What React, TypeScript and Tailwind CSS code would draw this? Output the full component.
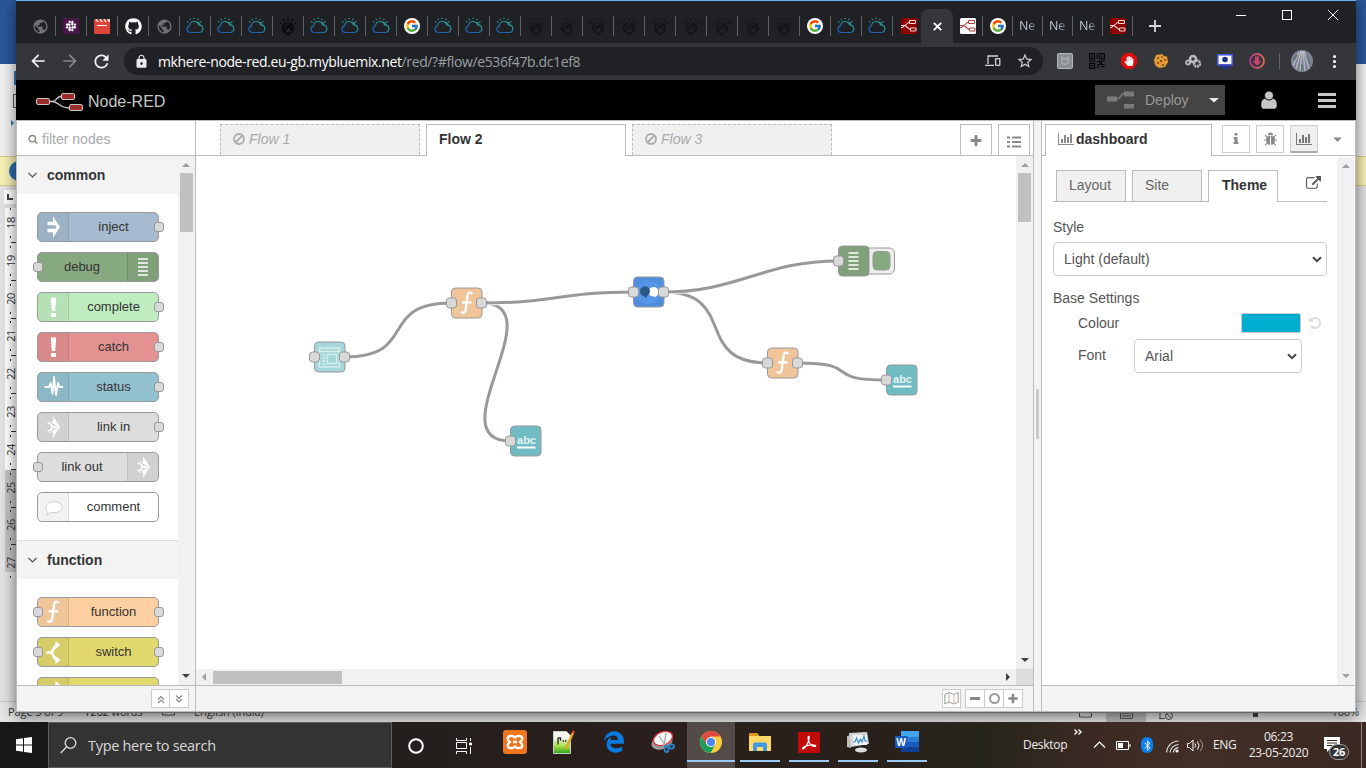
import React from "react";
import { FaGithub, FaSlack, FaEdgeLegacy, FaBluetoothB, FaHandPaper } from "react-icons/fa";
import { FcGoogle } from "react-icons/fc";
import { MdLock, MdArrowBack, MdArrowForward, MdRefresh, MdPublic, MdStarBorder } from "react-icons/md";

const SEGOE = "font-['Open_Sans','Noto_Sans',sans-serif]";
const ARIAL = "font-['Liberation_Sans',Arial,sans-serif]";

const FA = {
  bars: "M640 896v512h-256v-512h256zm384-512v1024h-256v-1024h256zm1024 1152v128h-2048v-1536h128v1408h1920zm-640-896v768h-256v-768h256zm384-384v1152h-256v-1152h256z",
  bug: "M1696 960q0 26-19 45t-45 19h-224q0 171-67 290l208 209q19 19 19 45t-19 45q-18 19-45 19t-45-19l-198-197q-5 5-15 13t-42 28.5-65 36.5-82 29-97 13v-896h-128v896q-51 0-101.5-13.5t-87-33-66-39-43.5-32.5l-15-14-183 207q-20 21-48 21-24 0-43-16-19-18-20.5-44.5t15.5-46.5l202-227q-58-114-58-274h-224q-26 0-45-19t-19-45 19-45 45-19h224v-294l-173-173q-19-19-19-45t19-45 45-19 45 19l173 173h844l173-173q19-19 45-19t45 19 19 45-19 45l-173 173v294h224q26 0 45 19t19 45zm-480-576h-640q0-133 93.5-226.5t226.5-93.5 226.5 93.5 93.5 226.5z",
  info: "M1216 1344v128q0 26-19 45t-45 19h-512q-26 0-45-19t-19-45v-128q0-26 19-45t45-19h64v-384h-64q-26 0-45-19t-19-45v-128q0-26 19-45t45-19h384q26 0 45 19t19 45v576h64q26 0 45 19t19 45zm-128-1152v192q0 26-19 45t-45 19h-256q-26 0-45-19t-19-45v-192q0-26 19-45t45-19h256q26 0 45 19t19 45z",
  plus: "M1600 736v192q0 40-28 68t-68 28h-416v416q0 40-28 68t-68 28h-192q-40 0-68-28t-28-68v-416h-416q-40 0-68-28t-28-68v-192q0-40 28-68t68-28h416v-416q0-40 28-68t68-28h192q40 0 68 28t28 68v416h416q40 0 68 28t28 68z",
  search: "M1216 832q0-185-131.5-316.5t-316.5-131.5-316.5 131.5-131.5 316.5 131.5 316.5 316.5 131.5 316.5-131.5 131.5-316.5zm512 832q0 52-38 90t-90 38q-54 0-90-38l-343-342q-179 124-399 124-143 0-273.5-55.5t-225-150-150-225-55.5-273.5 55.5-273.5 150-225 225-150 273.5-55.5 273.5 55.5 225 150 150 225 55.5 273.5q0 220-124 399l343 343q37 37 37 90z",
  external: "M1408 928v320q0 119-84.5 203.5t-203.5 84.5h-832q-119 0-203.5-84.5t-84.5-203.5v-832q0-119 84.5-203.5t203.5-84.5h704q14 0 23 9t9 23v64q0 14-9 23t-23 9h-704q-66 0-113 47t-47 113v832q0 66 47 113t113 47h832q66 0 113-47t47-113v-320q0-14 9-23t23-9h64q14 0 23 9t9 23zm384-864v512q0 26-19 45t-45 19-45-19l-176-176-652 652q-10 10-23 10t-23-10l-114-114q-10-10-10-23t10-23l652-652-176-176q-19-19-19-45t19-45 45-19h512q26 0 45 19t19 45z",
  undo: "M1664 896q0 156-61 298t-164 245-245 164-298 61q-172 0-327-72.5t-264-204.5q-7-10-6.5-22.5t8.5-20.5l137-138q10-9 25-9 16 2 23 12 73 95 179 147t225 52q104 0 198.5-40.5t163.5-109.5 109.5-163.5 40.5-198.5-40.5-198.5-109.5-163.5-163.5-109.5-198.5-40.5q-98 0-188 35.5t-160 101.5l137 138q31 30 14 69-17 40-59 40h-448q-26 0-45-19t-19-45v-448q0-42 40-59 39-17 69 14l130 129q107-101 244.5-156.5t284.5-55.5q156 0 298 61t245 164 164 245 61 298z",
};

function Fa({ d, size = 14, wide = false, className = "" }: { d: string; size?: number; wide?: boolean; className?: string }) {
  return (
    <svg className={`shrink-0 ${className}`} width={wide ? (size * 2048) / 1792 : size} height={size} viewBox={wide ? "0 0 2048 1792" : "0 0 1792 1792"} fill="currentColor">
      <path d={d} />
    </svg>
  );
}

/* ---------- Browser tab icons ---------- */

function Cloud() {
  return (
    <svg width="18" height="18" viewBox="0 0 18 18" fill="none" strokeWidth="1.2">
      <defs>
        <linearGradient id="cl" x1="0" y1="16" x2="12" y2="0" gradientUnits="userSpaceOnUse">
          <stop offset="0" stopColor="#1a4fb0" />
          <stop offset=".5" stopColor="#22759f" />
          <stop offset="1" stopColor="#2fb598" />
        </linearGradient>
      </defs>
      <path d="M4.200 15.500a3.400 3.400 0 0 1-.6-6.700C3.800 5.800 6 4.500 8 4.500s3.900 1 4.500 3.300c2.700.1 4.300 1.800 4.300 4 0 2.200-1.600 3.700-3.800 3.700z" stroke="url(#cl)" />
      <path d="M8 2V.8M11.500 3l.9-1.200M14 5.200l1.500-.7M4.700 3l-.9-1.200M2.500 5.200L1 4.500M11.200 5.200c1.500.2 2.500 1.300 2.800 2.500" stroke="#2c9a97" />
    </svg>
  );
}

function Watson({ tone }: { tone: string }) {
  return (
    <svg width="18" height="18" viewBox="0 0 18 18" fill="none" stroke={tone} strokeWidth="1.200">
      <circle cx="9" cy="11" r="5.500" />
      <path d="M4.500 13.500l8.500-6M5.500 8c3 0 7 2 7.500 6.500M12.500 7c-3 .5-6 4-6.500 8.500M4 10.500h10M7 17.500h4M9 3.500V1M12.500 4l1.200-2M5.500 4L4.300 2M15.200 6.500l2-1M2.800 6.500l-2-1" />
    </svg>
  );
}

function NodeRedFav({ bg, fg }: { bg: string; fg: string }) {
  return (
    <svg width="16" height="16" viewBox="0 0 16 16">
      <rect width="16" height="16" rx="1.500" fill={bg} />
      <g fill="none" stroke={fg} strokeWidth="1.100">
        <path d="M0 7.500h3c3 0 3-3.500 6-3.500M3 7.500c3 0 4 4 7 4M0 9.800c2 0 3-1.500 3.500-2.300" />
        <rect x="8.500" y="2.500" width="6" height="3" rx=".8" />
        <rect x="9.500" y="10" width="5.500" height="3" rx=".8" />
      </g>
    </svg>
  );
}

const Google = () => (
  <span className="flex size-4 items-center justify-center rounded-full bg-white">
    <FcGoogle size={14} />
  </span>
);

function TabIcon({ kind }: { kind: string }) {
  switch (kind) {
    case "globe":
      return <MdPublic size={17} className="text-[#6e7175]" />;
    case "slack":
      return (
        <span className="flex size-4 items-center justify-center bg-[#4a154b]">
          <FaSlack size={12} className="text-white" />
        </span>
      );
    case "clap":
      return (
        <svg width="16" height="16" viewBox="0 0 16 16">
          <rect width="16" height="16" rx="1" fill="#db4437" />
          <path d="M0 0h16v1.500H0z" fill="#202124" />
          <path d="M1 1l2 3h2L3 1zM5 1l2 3h2L7 1zM9 1l2 3h2l-2-3zM13 1l1.500 3H16V1z" fill="#f4d3cf" />
          <path d="M3 7.500h10" stroke="#fff" />
        </svg>
      );
    case "github":
      return <FaGithub size={17} className="text-white" />;
    case "cloud":
      return <Cloud />;
    case "bulb":
      return <Watson tone="#060708" />;
    case "watson":
      return <Watson tone="#121315" />;
    case "google":
      return <Google />;
    case "red":
      return <NodeRedFav bg="#8f0000" fg="#f0d8d8" />;
    case "white":
      return <NodeRedFav bg="#ffffff" fg="#b33c3c" />;
    default:
      return (
        <span className="bg-gradient-to-r from-[#c5d2e0] from-50% to-[#55585c] bg-clip-text pr-px text-[12.500px] leading-4 tracking-[-0.3px] text-transparent">Ne</span>
      );
  }
}

const LEFT_TABS =
  "globe slack clap github globe cloud cloud cloud bulb cloud cloud cloud google cloud cloud cloud watson watson watson watson watson watson watson watson watson google cloud cloud red".split(" ");
const RIGHT_TABS = "white google ne ne ne red".split(" ");

function TabStrip() {
  return (
    <div className={`flex h-[42px] bg-[#202124] pl-[9px] ${SEGOE}`}>
      <div className="flex pt-2">
        {LEFT_TABS.map((k, i) => (
          <div key={i} className="flex h-[34px] w-[31px] shrink-0 items-center">
            <div className="flex flex-1 items-center justify-center">
              <TabIcon kind={k} />
            </div>
            {i < LEFT_TABS.length - 1 && <div className="h-5 w-px bg-[#5f6165]" />}
          </div>
        ))}
      </div>
      <div className="mt-2 -ml-[3px] flex h-[34px] w-8 shrink-0 items-center justify-center rounded-t-lg bg-[#35363a]">
        <svg width="9" height="9" viewBox="0 0 9 9" stroke="#fff" strokeWidth="1.800">
          <path d="M.8.8l7.400 7.400M8.200.8L.8 8.200" />
        </svg>
      </div>
      <div className="flex pt-2">
        {RIGHT_TABS.map((k, i) => (
          <div key={i} className="flex h-[34px] w-[30px] items-center">
            <div className="flex flex-1 items-center justify-center">
              <TabIcon kind={k} />
            </div>
            <div className="h-5 w-px bg-[#5f6165]" />
          </div>
        ))}
      </div>
      <svg className="mt-[19px] ml-4" width="12" height="12" viewBox="0 0 12 12" stroke="#d5d7da" strokeWidth="1.800">
        <path d="M6 0v12M0 6h12" />
      </svg>
      <div className="mt-2 ml-[75px] flex h-3 items-center text-white">
        <svg width="104" height="12" viewBox="0 0 104 12" fill="none" stroke="currentColor" strokeWidth="1">
          <path d="M0 6.500h10M92 1l10 10M102 1L92 11" />
          <rect x="46.500" y="1.500" width="9" height="9" />
        </svg>
      </div>
    </div>
  );
}

function Toolbar() {
  return (
    <div className={`flex h-[37px] items-center bg-[#35363a] pb-px pl-3 text-[#f1f3f4] ${SEGOE}`}>
      <MdArrowBack size={20} />
      <MdArrowForward size={20} className="ml-3 text-[#85878a]" />
      <MdRefresh size={21} className="ml-[11px]" />
      <div className="ml-3 flex h-7 w-[919px] items-center rounded-full bg-[#202124] pr-[9px] pl-[10px] text-[14px]">
        <MdLock size={15} className="shrink-0 text-[#e8eaed]" />
        <span className="ml-[9px] tracking-[-0.38px] whitespace-nowrap text-white">
          mkhere-node-red.eu-gb.mybluemix.net<span className="text-[#9aa0a6]">/red/?#flow/e536f47b.dc1ef8</span>
        </span>
        <span className="grow" />
        <svg width="16" height="12" viewBox="0 0 16 12" fill="none" stroke="#d0d2d5" strokeWidth="1.300">
          <path d="M13 1H3v8M0 10.300h9" />
          <rect x="10.600" y="3.600" width="4.200" height="6.700" rx=".6" />
        </svg>
        <MdStarBorder size={18} className="ml-[15px] text-[#d0d2d5]" />
      </div>
      <div className="ml-[14px] flex items-center gap-4">
        <svg width="16" height="16" viewBox="0 0 16 16">
          <rect x=".5" y=".5" width="15" height="15" rx="1" fill="#8b9094" stroke="#b4b8bb" />
          <path d="M5 4.500l3 2 3-2v5.300l-3 1.700-3-1.700z" fill="none" stroke="#a9adb0" strokeWidth="1.500" />
        </svg>
        <svg width="16" height="16" viewBox="0 0 16 16" fill="none" stroke="#050505" strokeWidth="1.200">
          <path d="M.6.600h5v5h-5zM10.400.600h5v5h-5zM.600 10.400h5v5h-5zM8 8.500h3v3h-2v4M12.500 9v2.500h3M11.500 13.500h4M8 .5v5M.5 8h6M10.500 8h5" />
          <path d="M2.300 2.300h1.600v1.600H2.300zM12.100 2.300h1.600v1.600h-1.600zM2.300 12.100h1.600v1.600H2.300z" fill="#050505" stroke="none" />
        </svg>
        <span className="flex size-4 items-center justify-center bg-[#e30b0b] [clip-path:polygon(30%_0,70%_0,100%_30%,100%_70%,70%_100%,30%_100%,0_70%,0_30%)]">
          <FaHandPaper size={10} className="text-white" />
        </span>
        <svg width="16" height="16" viewBox="0 0 16 16">
          <path d="M3 2l6-1 2 2 3 .5L15 9l-3 5-6 1-4-3-1-5z" fill="#e39a35" />
          <g fill="#6e3d10"><circle cx="5" cy="5" r="1" /><circle cx="9" cy="4" r=".8" /><circle cx="8" cy="8" r="1.100" /><circle cx="12" cy="7" r=".9" /><circle cx="5" cy="10" r=".9" /><circle cx="10" cy="12" r="1" /></g>
        </svg>
        <svg width="16" height="16" viewBox="0 0 16 16" fill="none" stroke="#b9bbbd">
          <circle cx="8" cy="6" r="3" strokeWidth="2.500" />
          <circle cx="3" cy="9.500" r="2" strokeWidth="1.800" />
          <circle cx="12" cy="10.500" r="3" strokeWidth="2.500" strokeDasharray="2 .6" />
        </svg>
        <svg width="16" height="16" viewBox="0 0 16 16">
          <rect x=".8" y="1.800" width="14.400" height="10" fill="#fff" stroke="#4a5be0" strokeWidth="1.600" />
          <circle cx="8" cy="6.500" r="2.800" fill="#1c2f80" />
          <path d="M3 13.500h10M5 15.300h6" stroke="#27329a" strokeWidth="1.400" />
        </svg>
        <svg width="16" height="16" viewBox="0 0 16 16">
          <defs>
            <linearGradient id="dl" x1="0" x2="1"><stop offset="0" stopColor="#b3378e" /><stop offset="1" stopColor="#e0684c" /></linearGradient>
          </defs>
          <circle cx="8" cy="8" r="7" fill="none" stroke="url(#dl)" strokeWidth="1.800" />
          <path d="M6 3.500h4V8h2.500L8 12.700 3.500 8H6z" fill="#c9436f" />
        </svg>
      </div>
      <div className="ml-[14px] h-4 w-px bg-[#63656a]" />
      <svg className="ml-[11px]" width="22" height="22" viewBox="0 0 22 22">
        <circle cx="11" cy="11" r="11" fill="#7e8296" />
        <path d="M2 16L8 2M5 19L10 1M9 21l2-20M14 21L12 1M18 19L13 1" stroke="#b7b4bd" strokeWidth="1.400" />
        <path d="M3 10l3-5M16 6l3 8M11 14v7" stroke="#567a64" strokeWidth="1.500" />
      </svg>
      <div className="ml-5 flex flex-col gap-[2px]">
        <i className="size-[3px] rounded-full bg-white" />
        <i className="size-[3px] rounded-full bg-white" />
        <i className="size-[3px] rounded-full bg-white" />
      </div>
    </div>
  );
}

/* ---------- Node-RED ---------- */

function Header() {
  return (
    <div className="flex h-10 items-center bg-black pl-5">
      <svg className="mt-[3px]" width="48" height="20" viewBox="0 0 48 20">
        <path d="M13 9.500h3c5 0 4-5.500 11-5.500M16 9.500c7 0 7 6.500 17 6.500" fill="none" stroke="#c7c7c7" strokeWidth="1.400" />
        <g fill="#9b2d2d" stroke="#c7c7c7">
          <rect x=".5" y="6.500" width="13" height="6" rx="1.500" />
          <rect x="25.500" y="1.500" width="13" height="6" rx="1.500" />
          <rect x="33.500" y="12.500" width="13" height="6" rx="1.500" />
        </g>
      </svg>
      <span className="ml-1 pt-[3px] text-[16px] leading-6 text-[#c7c7c7]">Node-RED</span>
      <span className="grow" />
      <div className="flex h-[30px] w-[130px] items-center bg-[#444] pl-3 text-[14px] text-[#999]">
        <svg width="28" height="18" viewBox="0 0 28 18">
          <path d="M9 8c6 0 4-6 10-6" fill="none" stroke="#7a7a7a" strokeWidth="1.400" />
          <path d="M0 5.500h10v5H0zM17 .5h10v5H17zM17 13h10v4.500H17z" fill="#7a7a7a" />
        </svg>
        <span className="ml-[10px] text-[14px]">Deploy</span>
        <svg className="ml-5" width="10" height="6" viewBox="0 0 10 6"><path d="M0 1h10L5 5.500z" fill="#eee" /></svg>
      </div>
      <svg className="ml-9" width="16" height="18" viewBox="0 0 16 18" fill="#c7c7c7">
        <path d="M4 7.500C1.500 8 0 10.500.2 14.500.3 17 1.500 17.800 3 17.800h10c1.500 0 2.700-.8 2.800-3.300C16 10.500 14.500 8 12 7.500a5 5 0 0 1-8 0z" />
        <circle cx="8" cy="4.500" r="4.300" stroke="#000" strokeWidth=".4" />
      </svg>
      <div className="mr-5 ml-[41px] flex flex-col gap-[3px]">
        <i className="h-[3px] w-[18px] bg-[#c7c7c7]" />
        <i className="h-[3px] w-[18px] bg-[#c7c7c7]" />
        <i className="h-[3px] w-[18px] bg-[#c7c7c7]" />
      </div>
    </div>
  );
}

type IconKind = "inject" | "debug" | "alert" | "status" | "link" | "comment" | "function" | "switch";

function Glyph({ kind }: { kind: IconKind }) {
  switch (kind) {
    case "inject":
      return <path d="M9.500 9.700H15V4.200L22 15 15 25.800V20.300H9.500V16.800H17.300L18.500 15 17.300 13.200H9.500z" fill="#fff" />;
    case "debug":
      return <path d="M10 7h10M10 11h10M10 15h10M10 19h10M10 23h10" stroke="#fff" strokeWidth="1.400" />;
    case "alert":
      return <path d="M12.800 5.500h5.400l-1 13.500h-3.400zM13 21h5v4h-5z" fill="#fff" />;
    case "status":
      return <path d="M6.500 15H11l1.500-4 2 11L16 5l2 18 2-12 1.500 4H25" fill="none" stroke="#fff" strokeWidth="1.800" strokeLinejoin="round" />;
    case "link":
      return (
        <g fill="none" stroke="#d0d0d0">
          <path d="M10 9.500h5V4.200L22 15 15 25.800V20.500h-5V17h5l2-2-2-2h-5z" fill="#fff" stroke="none" />
          <path d="M9.500 11.300c6-.5 6 7.900 0 7.400" stroke="#d0d0d0" strokeWidth="4" />
          <path d="M9.500 11.300c6-.5 6 7.900 0 7.400" stroke="#fff" strokeWidth="1.600" />
          <path d="M14 12l7 3-7 3" strokeWidth="1" />
          <path d="M13 15h8" stroke="#fff" strokeWidth="1.400" />
        </g>
      );
    case "comment":
      return <path d="M10 20.800C6 18 7 9.800 16 9.800c11 0 11 11 0 10.800-1.500 0-2.500-.2-3.500-.5-1 1.700-2.500 2.500-4.500 2.700 1-.6 1.700-1.200 2-2z" fill="#fff" stroke="#d0d0d0" />;
    case "function":
      return <path d="M21 6c-3-2.600-4.600-1.200-5 2.300L14.300 21c-.4 3.600-2.400 5-5 2.900M10.500 14.300h9.500" fill="none" stroke="#fff" strokeWidth="2.300" />;
    default:
      return (
        <g fill="none" stroke="#fff" strokeWidth="2.600">
          <path d="M8.500 15.500h4c3 0 3-7.500 7-7.500M12.500 15.500c3 0 3 7.500 7 7.500" />
          <path d="M17.500 4l5 4-5 4zM17.500 19l5 4-5 4z" fill="#fff" stroke="none" />
        </g>
      );
  }
}

interface PaletteItem { label: string; bg: string; icon: IconKind; input?: boolean; output?: boolean; right?: boolean }

const COMMON: PaletteItem[] = [
  { label: "inject", bg: "bg-[#a6bbcf]", icon: "inject", output: true },
  { label: "debug", bg: "bg-[#87a980]", icon: "debug", input: true, right: true },
  { label: "complete", bg: "bg-[#c0edc0]", icon: "alert", output: true },
  { label: "catch", bg: "bg-[#e49191]", icon: "alert", output: true },
  { label: "status", bg: "bg-[#94c1d0]", icon: "status", output: true },
  { label: "link in", bg: "bg-[#dddddd]", icon: "link", output: true },
  { label: "link out", bg: "bg-[#dddddd]", icon: "link", input: true, right: true },
  { label: "comment", bg: "bg-white", icon: "comment" },
];
const FUNCTIONS: PaletteItem[] = [
  { label: "function", bg: "bg-[#fdd0a2]", icon: "function", input: true, output: true },
  { label: "switch", bg: "bg-[#e2d96e]", icon: "switch", input: true, output: true },
  { label: "", bg: "bg-[#e2d96e]", icon: "switch", input: true, output: true },
];

function PaletteNode({ n }: { n: PaletteItem }) {
  const port = "absolute top-[9px] size-[10px] rounded-[3px] border border-[#999] bg-[#d9d9d9]";
  return (
    <div className={`relative flex h-[30px] w-[122px] rounded-[5px] border border-[#999] ${n.bg} ${n.right ? "flex-row-reverse" : ""}`}>
      <div className={`w-[31px] bg-black/5 ${n.right ? "rounded-r-[4px] border-l" : "rounded-l-[4px] border-r"} border-black/10`}>
        <svg width="30" height="28" viewBox="0 1 30 28"><Glyph kind={n.icon} /></svg>
      </div>
      <div className={`flex-1 text-center text-[13px] leading-7 text-[#333] ${n.right ? "pr-px" : ""}`}>{n.label}</div>
      {n.input && <i className={`${port} -left-[5px]`} />}
      {n.output && <i className={`${port} -right-[6px]`} />}
    </div>
  );
}

function Category({ title, items }: { title: string; items: PaletteItem[] }) {
  return (
    <div>
      <div className="flex h-[38px] items-center bg-[#f3f3f3] pl-[11px] text-[14px] font-bold text-[#333]">
        <svg width="9" height="6" viewBox="0 0 9 6" fill="none" stroke="#555" strokeWidth="1.200"><path d="M.5 1l4 4 4-4" /></svg>
        <span className="ml-[10px]">{title}</span>
      </div>
      <div className="flex flex-col gap-[10px] px-5 pt-[18px] pb-[18px]">
        {items.map((n, i) => <PaletteNode key={i} n={n} />)}
      </div>
    </div>
  );
}

function Tri({ dir, dark = false }: { dir: "up" | "down" | "left" | "right"; dark?: boolean }) {
  const p = { up: "M0 6h8L4 2z", down: "M0 2h8L4 6z", left: "M6 0v8L2 4z", right: "M2 0v8l4-4z" }[dir];
  return <svg width="8" height="8" viewBox="0 0 8 8"><path d={p} fill={dark ? "#404040" : "#a0a0a0"} /></svg>;
}

function Palette() {
  return (
    <div className="flex w-[179px] flex-col border-r border-[#bbb]">
      <div className="flex h-[35px] items-center border-b border-[#bbb] pt-px pl-[11px] text-[14px] text-[#aaa]">
        <Fa d={FA.search} size={10} className="text-[#888]" />
        <span className="ml-1 pt-px">filter nodes</span>
      </div>
      <div className="flex h-[529px]">
        <div className="h-full w-[161px] overflow-hidden">
          <Category title="common" items={COMMON} />
          <div className="border-t border-[#ddd]"><Category title="function" items={FUNCTIONS} /></div>
        </div>
        <div className="flex flex-1 flex-col items-center bg-[#f1f1f1] py-[5px] pr-px">
          <Tri dir="up" />
          <div className="mt-1 h-[59px] w-[13px] bg-[#c1c1c1]" />
          <span className="grow" />
          <Tri dir="down" dark />
        </div>
      </div>
      <div className="flex h-[26px] justify-end border-t border-[#bbb] bg-[#f3f3f3] pt-[3px] pr-[6px]">
        {["M1 5.500L4 2.500l3 3M1 9l3-3 3 3", "M1 1.500l3 3 3-3M1 5l3 3 3-3"].map((d, i) => (
          <div key={i} className={`flex h-[19px] items-center justify-center border border-[#ccc] bg-white ${i ? "-ml-px w-5" : "w-[19px]"}`}>
            <svg width="8" height="10" viewBox="0 0 8 10" fill="none" stroke="#888" strokeWidth="1.200"><path d={d} /></svg>
          </div>
        ))}
      </div>
    </div>
  );
}

const Ban = () => (
  <svg width="12" height="12" viewBox="0 0 12 12" fill="none" stroke="#aaa" strokeWidth="1.800"><circle cx="6" cy="6" r="5" /><path d="M2.500 9.500l7-7" /></svg>
);

function FlowTab({ label, disabled = false }: { label: string; disabled?: boolean }) {
  return disabled ? (
    <div className="flex h-[31px] w-[200px] items-center gap-1 border border-b-0 border-dashed border-[#bbb] bg-[#f0f0f0] pb-[2px] pl-3 text-[14px] text-[#aaa] italic">
      <Ban />
      <span>{label}</span>
    </div>
  ) : (
    <div className="h-8 w-[200px] border border-b-0 border-[#bbb] bg-white pl-3 text-[14px] leading-[29px] font-bold text-[#333]">{label}</div>
  );
}

interface FlowNode { x: number; y: number; fill: string; kind: string; input?: boolean; output?: boolean }
const NODES: FlowNode[] = [
  { x: 314.5, y: 342, fill: "#a5d6d9", kind: "ui", input: true, output: true },
  { x: 451.5, y: 288, fill: "#f0c59a", kind: "function", input: true, output: true },
  { x: 510.5, y: 426, fill: "#6fbcc3", kind: "text", input: true },
  { x: 633.5, y: 277, fill: "#4f8edc", kind: "assistant", input: true, output: true },
  { x: 838.5, y: 246, fill: "#80a07a", kind: "debug", input: true },
  { x: 767.5, y: 348, fill: "#f0c59a", kind: "function", input: true, output: true },
  { x: 886.5, y: 365, fill: "#6fbcc3", kind: "text", input: true },
];
const WIRES = [
  "M481.500 303C556.500 303 435.500 441 510.500 441",
  "M481.500 303C556.500 303 558.500 292 633.500 292",
  "M344.500 357C419.500 357 376.500 303 451.500 303",
  "M663.500 292C738.500 292 692.500 363 767.500 363",
  "M663.500 292C738.500 292 763.500 261 838.500 261",
  "M797.500 363C864.500 363 819.500 380 886.500 380",
];

function Canvas() {
  return (
    <svg width="820" height="513" viewBox="196 156 820 513" className="block bg-white">
      {WIRES.map((d) => (
        <g key={d} fill="none">
          <path d={d} stroke="#fff" strokeWidth="5" />
          <path d={d} stroke="#999" strokeWidth="3" />
        </g>
      ))}
      <rect x="862.500" y="248" width="32" height="26" rx="5" fill="#eee" stroke="#999" />
      <rect x="873" y="251.500" width="17" height="18.500" rx="4" fill="#87a980" stroke="#999" />
      {NODES.map((n) => (
        <g key={`${n.x}-${n.y}`} transform={`translate(${n.x} ${n.y})`}>
          <rect width="30.500" height="30" rx="4" fill={n.fill} stroke="#999" />
          {n.kind === "function" && <Glyph kind="function" />}
          {n.kind === "debug" && <Glyph kind="debug" />}
          {n.kind === "text" && (
            <g>
              <text x="16" y="18" textAnchor="middle" fontSize="11" fontWeight="700" fill="#e4f3f4" fontFamily="Liberation Sans, Arial, sans-serif">abc</text>
              <path d="M6.500 21.500h18.500" stroke="#fff" strokeWidth="2" />
            </g>
          )}
          {n.kind === "ui" && (
            <g fill="none" stroke="#d5edee" strokeWidth="1.400">
              <path d="M5 6h20v19H5zM5 9.500h20M8 13h3M8 16h3M8 19h3M8 22h3" />
              <rect x="13" y="12.500" width="9" height="9" />
            </g>
          )}
          {n.kind === "assistant" && (
            <g>
              <circle cx="15" cy="15" r="12" fill="#5596e6" />
              <path d="M15 15a5 5 0 0 1 10 0c0 3-2.500 5-4 5.500v-1C17 19.500 15 18 15 15z" fill="#fff" />
              <path d="M6.500 14.500a5 5 0 1 1 8 3.800l-2.500 2.900-1.200-2c-2.500-.2-4.300-2.200-4.300-4.700z" fill="#2c5a86" />
            </g>
          )}
          {n.input && <rect x="-5" y="10" width="10" height="10" rx="3" fill="#d9d9d9" stroke="#999" />}
          {n.output && <rect x="25" y="10" width="10" height="10" rx="3" fill="#d9d9d9" stroke="#999" />}
        </g>
      ))}
    </svg>
  );
}

function Workspace() {
  return (
    <div className="flex w-[838px] flex-col border-r border-[#bbb]">
      <div className="flex h-[35px] items-start border-b border-[#bbb] pt-[3px] pl-6">
        <div className="flex gap-[6px]">
          <FlowTab label="Flow 1" disabled />
          <FlowTab label="Flow 2" />
          <FlowTab label="Flow 3" disabled />
        </div>
        <div className="ml-[128px] flex gap-[6px]">
          <div className="flex h-[31px] w-8 items-center justify-center border border-b-0 border-[#bbb] pt-[2px] text-[#888]"><Fa d={FA.plus} size={14} /></div>
          <div className="flex h-[31px] w-8 items-center justify-center border border-b-0 border-[#bbb] pt-[3px]">
            <svg width="14" height="12" viewBox="0 0 14 12" stroke="#888" strokeWidth="2"><path d="M0 1.500h3M5 1.500h9M0 6h3M5 6h9M0 10.500h3M5 10.500h9" /></svg>
          </div>
        </div>
      </div>
      <div className="flex">
        <Canvas />
        <div className="flex h-[513px] flex-1 flex-col items-center bg-[#f1f1f1] py-[5px]">
          <Tri dir="up" />
          <div className="mt-1 h-[49px] w-[13px] bg-[#c1c1c1]" />
          <span className="grow" />
          <Tri dir="down" dark />
        </div>
      </div>
      <div className="flex h-4">
        <div className="flex w-[820px] items-center bg-[#f1f1f1] px-1">
          <Tri dir="left" />
          <div className="ml-[5px] h-[13px] w-[129px] bg-[#c1c1c1]" />
          <span className="grow" />
          <Tri dir="right" dark />
        </div>
        <div className="flex-1 bg-[#dcdcdc]" />
      </div>
      <div className="flex h-[26px] justify-end border-t border-[#bbb] bg-[#f3f3f3] pt-[3px] pr-[10px] text-[#888]">
        <div className="mr-1 flex h-[19px] w-[19px] items-center justify-center border border-[#ccc] bg-white">
          <svg width="15" height="13" viewBox="0 0 15 13" fill="none" stroke="#999"><path d="M.8 2.500l4.200-2 5 2 4.200-2v9.500l-4.200 2-5-2-4.200 2z" /><path d="M5 .5v9.500" stroke="#c5a9a0" /><path d="M10 2.500v9.500" stroke="#e0a8a0" /></svg>
        </div>
        <div className="flex h-[19px] w-5 items-center justify-center border border-[#ccc] bg-white"><i className="h-[3px] w-[10px] bg-[#888]" /></div>
        <div className="-ml-px flex h-[19px] w-5 items-center justify-center border border-[#ccc] bg-white"><i className="size-[11px] rounded-full border-2 border-[#999]" /></div>
        <div className="-ml-px flex h-[19px] w-5 items-center justify-center border border-[#ccc] bg-white"><Fa d={FA.plus} size={12} /></div>
      </div>
    </div>
  );
}

function Select({ value, className }: { value: string; className: string }) {
  return (
    <div className={`flex h-[34px] items-center rounded-[4px] border border-[#ccc] bg-white pr-1 pl-[10px] text-[14px] text-[#555] ${className}`}>
      <span>{value}</span>
      <span className="grow" />
      <svg width="10" height="7" viewBox="0 0 10 7" fill="none" stroke="#444" strokeWidth="2"><path d="M1 1.200l4 4 4-4" /></svg>
    </div>
  );
}

function Sidebar() {
  const btn = "flex size-7 items-center justify-center border border-[#ccc]";
  return (
    <div className="flex w-[315px] flex-col border-r border-l border-[#bbb]">
      <div className="flex h-[35px] items-start border-b border-[#bbb] pt-[3px] pl-[3px]">
        <div className="flex h-8 w-[167px] items-center border border-b-0 border-[#bbb] bg-white pb-[3px] pl-3 text-[14px] font-bold text-[#333]">
          <Fa d={FA.bars} size={14} wide className="text-[#888]" />
          <span className="ml-[2px]">dashboard</span>
        </div>
        <div className="mt-px ml-[10px] flex gap-[6px] text-[#888]">
          <div className={btn}><Fa d={FA.info} size={14} /></div>
          <div className={btn}><Fa d={FA.bug} size={15} /></div>
          <div className={`${btn} border-b-2 border-b-[#aaa] bg-[#efefef]`}><Fa d={FA.bars} size={14} wide className="text-[#777]" /></div>
        </div>
        <svg className="mt-[13px] ml-[15px]" width="9" height="6" viewBox="0 0 9 6"><path d="M.3.500h8.400L4.500 5z" fill="#888" /></svg>
      </div>
      <div className="flex h-[529px]">
        <div className="w-[295px] pt-[14px] pl-[11px] text-[14px] text-[#555]">
          <div className="flex h-8 w-[274px] items-start gap-[6px] border-b border-[#bbb] pl-[3px] text-[#666]">
            <div className="h-[31px] w-[70px] border border-b-0 border-[#bbb] bg-[#f0f0f0] pl-3 leading-[29px]">Layout</div>
            <div className="h-[31px] w-[70px] border border-b-0 border-[#bbb] bg-[#f0f0f0] pl-3 leading-[29px]">Site</div>
            <div className="h-8 w-[70px] border border-b-0 border-[#bbb] bg-white pl-[13px] leading-[29px] font-bold text-[#333]">Theme</div>
            <Fa d={FA.external} size={15} className="mt-[6px] ml-[22px] text-[#555]" />
          </div>
          <div className="mt-[15px] leading-5">Style</div>
          <Select value="Light (default)" className="mt-[5px] w-[274px]" />
          <div className="mt-3 leading-5">Base Settings</div>
          <div className="mt-[5px] flex h-5 items-center pl-[25px]">
            <span className="w-[163px]">Colour</span>
            <div className="h-5 w-[60px] rounded-[2px] border border-[#ccc] bg-[#00adcf]" />
            <Fa d={FA.undo} size={14} className="ml-[7px] text-[#ddd]" />
          </div>
          <div className="mt-[6px] flex items-center pl-[25px]">
            <span className="w-[56px] pb-[2px]">Font</span>
            <Select value="Arial" className="w-[168px]" />
          </div>
        </div>
        <div className="mt-px mr-px flex flex-1 flex-col items-center bg-[#f1f1f1] py-[5px]">
          <Tri dir="up" />
          <span className="grow" />
          <Tri dir="down" />
        </div>
      </div>
      <div className="h-[26px] border-t border-[#bbb] bg-[#f3f3f3]" />
    </div>
  );
}

function BrowserWindow() {
  return (
    <div className={`absolute top-0 left-4 flex h-[713px] w-[1340px] flex-col border-t border-[#6cb2f2] bg-white shadow-[0_3px_14px_rgba(0,0,0,0.55)] ${ARIAL}`}>
      <TabStrip />
      <Toolbar />
      <Header />
      <div className="flex h-[592px] border-t border-b border-l border-[#bbb]">
        <Palette />
        <Workspace />
        <div className="flex w-[7px] items-center justify-center bg-[#f3f3f3] pb-1"><i className="h-[50px] w-[3px] bg-[#ccc]" /></div>
        <Sidebar />
      </div>
      <div className="h-px shrink-0 bg-[#666]" />
    </div>
  );
}

/* ---------- Word window behind ---------- */

function WordWindow() {
  return (
    <div className={`flex h-full flex-col text-[#333] ${SEGOE}`}>
      <div className="h-16 bg-[#2b579a]" />
      <div className="flex h-[92px] flex-col bg-[#f1f1f1]">
        <div className="mt-[7px] ml-[14px] h-[14px] w-3 bg-[#2e75b6]" />
        <div className="mt-[9px] ml-[13px] h-[14px] w-3 border border-[#555]" />
        <svg className="mt-[11px] ml-[10px]" width="6" height="10" viewBox="0 0 6 10"><path d="M1 1v6l3-3z" fill="#2e75b6" /></svg>
      </div>
      <div className="flex h-[30px] items-center border-y border-[#d6cf8a] bg-[#f6f1b4] pl-[9px]"><i className="size-5 rounded-full bg-[#2b6cb0]" /></div>
      <div className="flex flex-1 flex-col bg-[#e2e2e2]">
        <div className="mt-1 ml-1 flex h-[14px] w-3 items-center justify-center bg-white">
          <svg width="6" height="6" viewBox="0 0 6 6"><path d="M1 0v5h5" fill="none" stroke="#444" strokeWidth="2" /></svg>
        </div>
        <div className="mt-1 ml-[5px] flex h-[364px] w-[11px] flex-col bg-gradient-to-b from-white from-[72%] to-[#c2c2c2] to-[72%] text-[11px]">
          {[18, 19, 20, 21, 22, 23, 24, 25, 26, 27].map((n) => (
            <div key={n} className="flex h-[37.800px] shrink-0 flex-col items-center">
              <i className="h-[2px] w-px shrink-0 bg-[#333]" />
              <span className="flex h-[26px] -rotate-90 items-center justify-center tracking-[-0.5px]">{n}</span>
              <i className="h-[2px] w-px shrink-0 bg-[#333]" />
              {n < 27 && <i className="mt-1 h-px w-[5px] self-end bg-[#333]" />}
            </div>
          ))}
        </div>
      </div>
      <div className="flex h-[21px] items-center border-t border-[#c6c6c6] bg-[#e4e4e4] pl-2 text-[11px] tracking-[-0.1px]">
        <span className="w-[76px]">Page 5 of 9</span>
        <span className="w-[78px]">1262 words</span>
        <svg width="13" height="10" viewBox="0 0 13 10" fill="none" stroke="#444"><path d="M.5 1h5l1 1 1-1h5v7h-5l-1 1-1-1h-5z" /></svg>
        <span className="ml-[19px]">English (India)</span>
        <span className="grow" />
        <svg className="mt-1" width="13" height="10" viewBox="0 0 13 10" fill="none" stroke="#555"><path d="M.5 1h5l1 1 1-1h5v7h-5l-1 1-1-1h-5z" /></svg>
        <div className="ml-[14px] flex h-full w-10 items-center justify-center bg-[#b9b9b9] pt-1"><svg width="13" height="10" viewBox="0 0 13 10" fill="none" stroke="#555"><path d="M.5.500h12v9H.5zM2 4h9M2 7h9" /></svg></div>
        <svg className="mt-1 ml-[13px]" width="14" height="11" viewBox="0 0 14 11" fill="none" stroke="#555"><path d="M0 9.500h6M1 1v8" /><circle cx="10" cy="7" r="3.500" /><path d="M8 5l4 4" /></svg>
        <i className="ml-[80px] h-[10px] w-[5px] bg-[#444]" />
        <span className="mr-[7px] ml-[73px]">100%</span>
      </div>
    </div>
  );
}

/* ---------- Taskbar ---------- */

function TaskButton({ x, children, active = false, open = false }: { x: string; children: React.ReactNode; active?: boolean; open?: boolean }) {
  return (
    <div className={`flex h-full flex-col items-center ${x} ${active ? "h-10 bg-white/20" : ""}`}>
      <div className="flex h-[38px] items-center justify-center pt-[2px]">{children}</div>
      {open && <i className={`h-[2px] bg-[#99c9f7] ${active ? "w-12" : "w-10"}`} />}
    </div>
  );
}

function Taskbar() {
  return (
    <div className={`flex h-[46px] bg-[linear-gradient(90deg,#171717_0,#231f1d_400px,#2a1f1c_640px,#29201b_850px,#26251a_980px,#3b2a23_1090px,#422e26_1200px,#3a2922_1366px)] text-[#eee] ${SEGOE}`}>
      <div className="flex w-12 items-center justify-center">
        <svg width="16" height="16" viewBox="0 0 16 16" fill="#fff"><path d="M0 2.200l7-1v6.400H0zM8 1.100L16 0v7.600H8zM0 8.500h7v6.300l-7-1zM8 8.500h8V16l-8-1.100z" /></svg>
      </div>
      <div className="flex w-[344px] items-center border border-[#5c5c5c] bg-[#333] pl-[11px] text-[14.500px] tracking-[-0.3px] text-[#d8d8d8]">
        <svg width="17" height="17" viewBox="0 0 17 17" fill="none" stroke="#ddd" strokeWidth="1.300"><circle cx="10.500" cy="6" r="5.300" /><path d="M6.700 9.800L.7 16" /></svg>
        <span className="ml-[11px] pt-[2px]">Type here to search</span>
      </div>
      <TaskButton x="w-12"><svg className="mt-2" width="16" height="16" viewBox="0 0 16 16"><circle cx="8" cy="8" r="6.800" fill="none" stroke="#fff" strokeWidth="2" /></svg></TaskButton>
      <TaskButton x="w-12">
        <svg className="mt-2" width="17" height="16" viewBox="0 0 17 16" fill="none" stroke="#fff"><path d="M.5 0v2.500h10V0M.5 16v-2.500h10V16M.5 4.500h10v6H.5zM14.500 0v3M14.500 9v7" /><path d="M13.500 5h2v2h-2z" fill="#fff" /></svg>
      </TaskButton>
      <TaskButton x="w-[54px]">
        <svg width="24" height="24" viewBox="0 0 24 24">
          <rect width="24" height="24" rx="3" fill="#f0761d" />
          <path d="M8 5.800c2 0 4 1.200 4 2.700 0-1.500 2-2.700 4-2.700s3.300 1.300 3.300 2.900S18 11 17 12c1 1 2.300 1.700 2.300 3.300S18 18.200 16 18.200s-4-1.200-4-2.700c0 1.500-2 2.700-4 2.700s-3.300-1.300-3.300-2.900S6 13 7 12c-1-1-2.300-1.700-2.300-3.300S6 5.800 8 5.800zM10 12h4" fill="none" stroke="#fff" strokeWidth="2.300" />
        </svg>
      </TaskButton>
      <TaskButton x="w-[43px]">
        <svg width="22" height="24" viewBox="0 0 22 24">
          <defs><linearGradient id="np" x1="0" y1="0" x2="0" y2="1"><stop offset=".3" stopColor="#f4f7ee" /><stop offset=".65" stopColor="#a6e04a" /><stop offset="1" stopColor="#2f9e1c" /></linearGradient></defs>
          <path d="M.5 1.500h13l4 4V23.500H.5z" fill="url(#np)" stroke="#c9d0c4" />
          <path d="M5 14.500V7.500M5 7.800h2.500v3M9.500 11h1.500M12 11h1.500" fill="none" stroke="#222" strokeWidth="1.300" />
          <path d="M20.500 1.500L13 19" stroke="#e2a32b" strokeWidth="2.400" /><path d="M19.800 3l1-2.300" stroke="#c33" strokeWidth="2.400" />
        </svg>
      </TaskButton>
      <TaskButton x="w-[57px]"><FaEdgeLegacy size={22} className="text-[#0a7be0]" /></TaskButton>
      <TaskButton x="w-[42px]">
        <svg width="24" height="24" viewBox="0 0 24 24">
          <ellipse cx="11" cy="12" rx="11" ry="7" transform="rotate(-22 11 12)" fill="#9d9d9d" />
          <ellipse cx="12" cy="8.500" rx="10" ry="6.500" transform="rotate(-22 12 8.500)" fill="#f7f7f7" stroke="#d9353b" strokeWidth="1.400" />
          <path d="M8 6l6 9M15 3l-2 13" stroke="#9aa" strokeWidth="1.300" />
          <g fill="none" stroke="#2980c4" strokeWidth="1.800"><ellipse cx="15.500" cy="19" rx="2" ry="3" /><ellipse cx="20.500" cy="16.500" rx="2.600" ry="2" /></g>
        </svg>
      </TaskButton>
      <div className="w-[3px]" />
      <TaskButton x="w-12" active open>
        <svg width="22" height="22" viewBox="0 0 22 22">
          <circle cx="11" cy="11" r="11" fill="#ffcd40" />
          <path d="M11 0a11 11 0 0 1 9.500 5.500H11L6 13.500 1.500 5.500A11 11 0 0 1 11 0z" fill="#dd4b3e" />
          <path d="M1.500 5.500A11 11 0 0 0 10.500 22l5-8.500H6.300z" fill="#1a9f5c" />
          <circle cx="11" cy="11" r="5" fill="#fff" /><circle cx="11" cy="11" r="4" fill="#4587f3" />
        </svg>
      </TaskButton>
      <TaskButton x="w-[49px]" open>
        <svg width="22" height="20" viewBox="0 0 22 20"><path d="M0 1h8l2 2v3H0z" fill="#d99a17" /><path d="M0 4h22v15H0z" fill="#ffd868" /><path d="M4 19v-7l1.500-1.500h11L18 12v7h-4v-4H8v4z" fill="#3c9be6" /></svg>
      </TaskButton>
      <TaskButton x="w-[49px]" open>
        <svg width="22" height="21" viewBox="0 0 22 21"><rect width="22" height="21" rx="1" fill="#c10a0a" /><path d="M4.500 16.500c1-2.500 10-5 13-3 1 1.200-2.500 1.300-4.500-.5C11 11 9.300 6 10.300 4.500c1.500-1 1 4-1.300 8-2 3.500-4 5-4.500 4z" fill="none" stroke="#fff" strokeWidth="1.200" /></svg>
      </TaskButton>
      <TaskButton x="w-[49px]" open>
        <svg width="24" height="22" viewBox="0 0 24 22"><path d="M1 5l4-1v13l-4-1z" fill="#bcbcbc" /><path d="M3 2l18-1 2 12-18 3z" fill="#d5d5d5" /><path d="M7 4h14v10H7z" fill="#eef6fb" /><path d="M7 11h2l1.500-4 2 5 2-4 1.500 3 2-6 1 5h2" fill="none" stroke="#3a8fc9" strokeWidth="1.200" /><ellipse cx="15" cy="19" rx="6" ry="2.500" fill="#dcdcdc" /></svg>
      </TaskButton>
      <TaskButton x="w-[49px]" open>
        <svg width="24" height="22" viewBox="0 0 24 22"><path d="M6 0h18v6H6z" fill="#41a5ee" /><path d="M6 6h18v5H6z" fill="#2b7cd3" /><path d="M6 11h18v5H6z" fill="#185abd" /><path d="M6 16h18v5H6z" fill="#103f91" /><rect y="5" width="12.500" height="12" rx="1" fill="#185abd" /><text x="6.200" y="14.500" fontSize="10" fontWeight="700" textAnchor="middle" fill="#fff" fontFamily="Open Sans">W</text></svg>
      </TaskButton>
      <span className="grow" />
      <div className="flex w-[343px] shrink-0 items-center text-[12px] tracking-[-0.3px]">
        <span className="w-[51px]">Desktop</span>
        <svg className="mb-[27px]" width="9" height="6" viewBox="0 0 9 6" fill="none" stroke="#fff" strokeWidth="1.400"><path d="M.5.500L3 3 .5 5.500M4.500.500L7 3 4.500 5.500" /></svg>
        <svg className="ml-[10px]" width="13" height="8" viewBox="0 0 13 8" fill="none" stroke="#fff" strokeWidth="1.200"><path d="M1 6.500l5.500-5.500L12 6.500" /></svg>
        <svg className="mt-px ml-[10px]" width="15" height="9" viewBox="0 0 15 9"><path d="M.5.500h12v8H.5zM14 3v3" fill="none" stroke="#fff" /><path d="M2 2h5v5H2z" fill="#fff" /></svg>
        <span className="ml-[10px] flex h-4 w-3 items-center justify-center rounded-[6px] bg-[#0a80f0]"><FaBluetoothB size={11} /></span>
        <svg className="mt-[2px] ml-[13px]" width="13" height="13" viewBox="0 0 13 13" fill="none" stroke="#ddd" strokeWidth="1.200"><path d="M.6 12.500A12 12 0 0 1 12.500 1M4 12.500a9 9 0 0 1 8.500-8M7.200 12.500A6 6 0 0 1 12.500 7.700" /><circle cx="11" cy="11" r="1.600" fill="#fff" stroke="none" /></svg>
        <svg className="ml-[8px]" width="17" height="13" viewBox="0 0 17 13" fill="none" stroke="#fff"><path d="M.5 4.500h2L6 1v11L2.500 8.500h-2zM8 4.500q1.500 2 0 4M10.500 2.500q3 4 0 8" /><path d="M13 .8q5 5.500 0 11.500" opacity=".5" /></svg>
        <span className="ml-[9px] w-[26px]">ENG</span>
        <div className="ml-[9px] w-[61px] text-center leading-4 whitespace-nowrap">06:23<br />23-05-2020</div>
        <div className="relative ml-[15px] size-4">
          <svg width="16" height="15" viewBox="0 0 16 15"><path d="M0 0h16v12H6l-3 3v-3H0z" fill="#fff" /><path d="M3 3.500h10M3 6h10M3 8.500h5" stroke="#3a2922" /></svg>
          <span className="absolute top-[7px] left-[5px] flex h-4 w-5 items-center justify-center rounded-full border border-[#999] bg-[#333] text-[11px] font-bold text-white">26</span>
        </div>
        <div className="ml-[21px] h-[46px] w-px bg-[#8a7f7a]" />
      </div>
    </div>
  );
}

export default function App() {
  return (
    <div className="flex h-[768px] w-[1366px] flex-col overflow-hidden">
      <div className="relative h-[722px] overflow-hidden">
        <WordWindow />
        <BrowserWindow />
      </div>
      <Taskbar />
    </div>
  );
}
